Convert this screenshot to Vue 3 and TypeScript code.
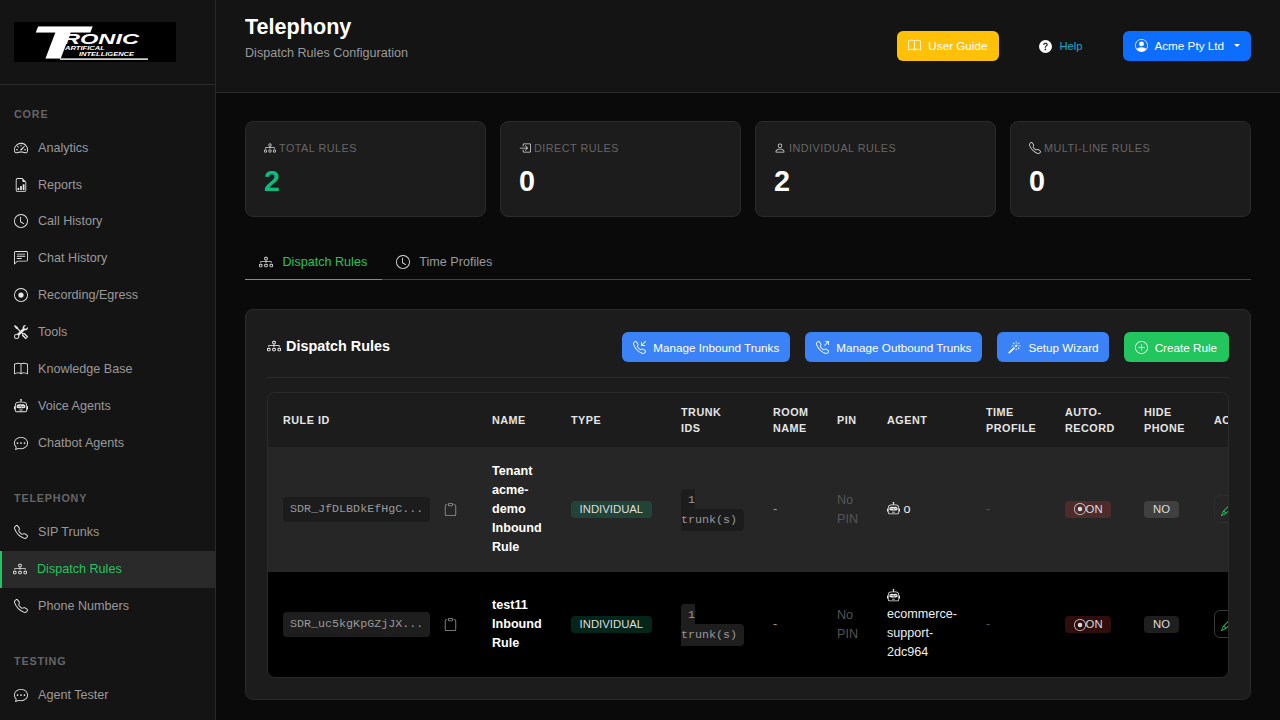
<script setup lang="ts">
import { h } from 'vue'

const phone =
  'M3.654 1.328a.678.678 0 0 0-1.015-.063L1.605 2.3c-.483.484-.661 1.169-.45 1.77a17.568 17.568 0 0 0 4.168 6.608 17.569 17.569 0 0 0 6.608 4.168c.601.211 1.286.033 1.77-.45l1.034-1.034a.678.678 0 0 0-.063-1.015l-2.307-1.794a.678.678 0 0 0-.58-.122l-2.19.547a1.745 1.745 0 0 1-1.657-.459L5.482 8.062a1.745 1.745 0 0 1-.46-1.657l.548-2.19a.678.678 0 0 0-.122-.58L3.654 1.328zM1.884.511a1.745 1.745 0 0 1 2.612.163L6.29 2.98c.329.423.445.974.315 1.494l-.547 2.19a.678.678 0 0 0 .178.643l2.457 2.457a.678.678 0 0 0 .644.178l2.189-.547a1.745 1.745 0 0 1 1.494.315l2.306 1.794c.829.645.905 1.87.163 2.611l-1.034 1.034c-.74.74-1.846 1.065-2.877.702a18.634 18.634 0 0 1-7.01-4.42 18.634 18.634 0 0 1-4.42-7.009c-.362-1.03-.037-2.137.703-2.877L1.885.511z'

const icons: Record<string, string[]> = {
  speed: [
    'M8 4a.5.5 0 0 1 .5.5V6a.5.5 0 0 1-1 0V4.5A.5.5 0 0 1 8 4zM3.732 5.732a.5.5 0 0 1 .707 0l.915.914a.5.5 0 1 1-.708.708l-.914-.915a.5.5 0 0 1 0-.707zM2 10a.5.5 0 0 1 .5-.5h1.586a.5.5 0 0 1 0 1H2.5A.5.5 0 0 1 2 10zm9.5 0a.5.5 0 0 1 .5-.5h1.5a.5.5 0 0 1 0 1H12a.5.5 0 0 1-.5-.5zm.754-4.246a.389.389 0 0 0-.527-.02L7.547 9.31a.91.91 0 1 0 1.302 1.258l3.434-4.297a.389.389 0 0 0-.029-.518z',
    'M0 10a8 8 0 1 1 15.547 2.661c-.442 1.253-1.845 1.602-2.932 1.25C11.309 13.488 9.475 13 8 13c-1.474 0-3.31.488-4.615.911-1.087.352-2.49.003-2.932-1.25A7.988 7.988 0 0 1 0 10zm8-7a7 7 0 0 0-6.603 9.329c.203.575.923.876 1.68.63C4.397 12.533 6.358 12 8 12s3.604.532 4.923.96c.757.245 1.477-.056 1.68-.631A7 7 0 0 0 8 3z'
  ],
  report: [
    'M10 13.5a.5.5 0 0 0 .5.5h1a.5.5 0 0 0 .5-.5v-6a.5.5 0 0 0-.5-.5h-1a.5.5 0 0 0-.5.5v6zm-2.5.5a.5.5 0 0 1-.5-.5v-4a.5.5 0 0 1 .5-.5h1a.5.5 0 0 1 .5.5v4a.5.5 0 0 1-.5.5h-1zm-3 0a.5.5 0 0 1-.5-.5v-2a.5.5 0 0 1 .5-.5h1a.5.5 0 0 1 .5.5v2a.5.5 0 0 1-.5.5h-1z',
    'M14 14V4.5L9.5 0H4a2 2 0 0 0-2 2v12a2 2 0 0 0 2 2h8a2 2 0 0 0 2-2zM9.5 3A1.5 1.5 0 0 0 11 4.5h2V14a1 1 0 0 1-1 1H4a1 1 0 0 1-1-1V2a1 1 0 0 1 1-1h5.5v2z'
  ],
  clock: [
    'M8 3.5a.5.5 0 0 0-1 0V9a.5.5 0 0 0 .252.434l3.5 2a.5.5 0 0 0 .496-.868L8 8.71V3.5z',
    'M8 16A8 8 0 1 0 8 0a8 8 0 0 0 0 16zm7-8A7 7 0 1 1 1 8a7 7 0 0 1 14 0z'
  ],
  chat: [
    'M14 1a1 1 0 0 1 1 1v8a1 1 0 0 1-1 1H4.414A2 2 0 0 0 3 11.586l-2 2V2a1 1 0 0 1 1-1h12zM2 0a2 2 0 0 0-2 2v12.793a.5.5 0 0 0 .854.353l2.853-2.853A1 1 0 0 1 4.414 12H14a2 2 0 0 0 2-2V2a2 2 0 0 0-2-2H2z',
    'M3 3.5a.5.5 0 0 1 .5-.5h9a.5.5 0 0 1 0 1h-9a.5.5 0 0 1-.5-.5zM3 6a.5.5 0 0 1 .5-.5h9a.5.5 0 0 1 0 1h-9A.5.5 0 0 1 3 6zm0 2.5a.5.5 0 0 1 .5-.5h5a.5.5 0 0 1 0 1h-5a.5.5 0 0 1-.5-.5z'
  ],
  record: [
    'M8 15A7 7 0 1 1 8 1a7 7 0 0 1 0 14zm0 1A8 8 0 1 0 8 0a8 8 0 0 0 0 16z',
    'M11 8a3 3 0 1 1-6 0 3 3 0 0 1 6 0z'
  ],
  tools: [
    'M1 0 0 1l2.2 3.081a1 1 0 0 0 .815.419h.07a1 1 0 0 1 .708.293l2.675 2.675-2.617 2.654A3.003 3.003 0 0 0 0 13a3 3 0 1 0 5.878-.851l2.654-2.617.968.968-.305.914a1 1 0 0 0 .242 1.023l3.27 3.27a.997.997 0 0 0 1.414 0l1.586-1.586a.997.997 0 0 0 0-1.414l-3.27-3.27a1 1 0 0 0-1.023-.242L10.5 9.5l-.96-.96 2.68-2.643A3.005 3.005 0 0 0 16 3c0-.269-.035-.53-.102-.777l-2.14 2.141L12 4l-.364-1.757L13.777.102a3 3 0 0 0-3.675 3.68L7.462 6.46 4.793 3.793a1 1 0 0 1-.293-.707v-.071a1 1 0 0 0-.419-.814L1 0Zm9.646 10.646a.5.5 0 0 1 .708 0l2.914 2.915a.5.5 0 0 1-.707.707l-2.915-2.914a.5.5 0 0 1 0-.708ZM3 11l.471.242.529.026.287.445.445.287.026.529L5 13l-.242.471-.026.529-.445.287-.287.445-.529.026L3 15l-.471-.242L2 14.732l-.287-.445L1.268 14l-.026-.529L1 13l.242-.471.026-.529.445-.287.287-.445.529-.026L3 11Z'
  ],
  book: [
    'M1 2.828c.885-.37 2.154-.769 3.388-.893 1.33-.134 2.458.063 3.112.752v9.746c-.935-.53-2.12-.603-3.213-.493-1.18.12-2.37.461-3.287.811V2.828zm7.5-.141c.654-.689 1.782-.886 3.112-.752 1.234.124 2.503.523 3.388.893v9.923c-.918-.35-2.107-.692-3.287-.81-1.094-.111-2.278-.039-3.213.492V2.687zM8 1.783C7.015.936 5.587.81 4.287.94c-1.514.153-3.042.672-3.994 1.105A.5.5 0 0 0 0 2.5v11a.5.5 0 0 0 .707.455c.882-.4 2.303-.881 3.68-1.02 1.409-.142 2.59.087 3.223.877a.5.5 0 0 0 .78 0c.633-.79 1.814-1.019 3.222-.877 1.378.139 2.8.62 3.681 1.02A.5.5 0 0 0 16 13.5v-11a.5.5 0 0 0-.293-.455c-.952-.433-2.48-.952-3.994-1.105C10.413.809 8.985.936 8 1.783z'
  ],
  robot: [
    'M6 12.5a.5.5 0 0 1 .5-.5h3a.5.5 0 0 1 0 1h-3a.5.5 0 0 1-.5-.5ZM3 8.062C3 6.76 4.235 5.765 5.53 5.886a26.58 26.58 0 0 0 4.94 0C11.765 5.765 13 6.76 13 8.062v1.157a.933.933 0 0 1-.765.935c-.845.147-2.34.346-4.235.346-1.895 0-3.39-.2-4.235-.346A.933.933 0 0 1 3 9.219V8.062Zm4.542-.827a.25.25 0 0 0-.217.068l-.92.9a24.767 24.767 0 0 1-1.871-.183.25.25 0 0 0-.068.495c.55.076 1.232.149 2.02.193a.25.25 0 0 0 .189-.071l.754-.736.847 1.71a.25.25 0 0 0 .404.062l.932-.97a25.286 25.286 0 0 0 1.922-.188.25.25 0 0 0-.068-.495c-.538.074-1.207.145-1.98.189a.25.25 0 0 0-.166.076l-.754.785-.842-1.7a.25.25 0 0 0-.182-.135Z',
    'M8.5 1.866a1 1 0 1 0-1 0V3h-2A4.5 4.5 0 0 0 1 7.5V8a1 1 0 0 0-1 1v2a1 1 0 0 0 1 1v1a2 2 0 0 0 2 2h10a2 2 0 0 0 2-2v-1a1 1 0 0 0 1-1V9a1 1 0 0 0-1-1v-.5A4.5 4.5 0 0 0 10.5 3h-2V1.866ZM14 7.5V13a1 1 0 0 1-1 1H3a1 1 0 0 1-1-1V7.5A3.5 3.5 0 0 1 5.5 4h5A3.5 3.5 0 0 1 14 7.5Z'
  ],
  dots: [
    'M5 8a1 1 0 1 1-2 0 1 1 0 0 1 2 0zm4 0a1 1 0 1 1-2 0 1 1 0 0 1 2 0zm3 1a1 1 0 1 0 0-2 1 1 0 0 0 0 2z',
    'm2.165 15.803.02-.004c1.83-.363 2.948-.842 3.468-1.105A9.06 9.06 0 0 0 8 15c4.418 0 8-3.134 8-7s-3.582-7-8-7-8 3.134-8 7c0 1.76.743 3.37 1.97 4.6a10.437 10.437 0 0 1-.524 2.318l-.003.011a10.722 10.722 0 0 1-.244.637c-.079.186.074.394.273.362a21.673 21.673 0 0 0 .693-.125zm.8-3.108a1 1 0 0 0-.287-.801C1.618 10.83 1 9.468 1 8c0-3.192 3.004-6 7-6s7 2.808 7 6c0 3.193-3.004 6-7 6a8.06 8.06 0 0 1-2.088-.272 1 1 0 0 0-.711.074c-.387.196-1.24.57-2.634.893a10.97 10.97 0 0 0 .398-2z'
  ],
  phone: [phone],
  inbound: [
    'M15.854.146a.5.5 0 0 1 0 .708L11.707 5H14.5a.5.5 0 0 1 0 1h-4a.5.5 0 0 1-.5-.5v-4a.5.5 0 0 1 1 0v2.793L15.146.146a.5.5 0 0 1 .708 0z',
    phone
  ],
  outbound: [
    'M11 .5a.5.5 0 0 1 .5-.5h4a.5.5 0 0 1 .5.5v4a.5.5 0 0 1-1 0V1.707l-4.146 4.147a.5.5 0 0 1-.708-.708L14.293 1H11.5a.5.5 0 0 1-.5-.5z',
    phone
  ],
  diagram: [
    'M6 3.5A1.5 1.5 0 0 1 7.5 2h1A1.5 1.5 0 0 1 10 3.5v1A1.5 1.5 0 0 1 8.5 6v1H14a.5.5 0 0 1 .5.5v1a.5.5 0 0 1-1 0V8h-5v.5a.5.5 0 0 1-1 0V8h-5v.5a.5.5 0 0 1-1 0v-1A.5.5 0 0 1 2 7h5.5V6A1.5 1.5 0 0 1 6 4.5v-1zM8.5 5a.5.5 0 0 0 .5-.5v-1a.5.5 0 0 0-.5-.5h-1a.5.5 0 0 0-.5.5v1a.5.5 0 0 0 .5.5h1zM0 11.5A1.5 1.5 0 0 1 1.5 10h1A1.5 1.5 0 0 1 4 11.5v1A1.5 1.5 0 0 1 2.5 14h-1A1.5 1.5 0 0 1 0 12.5v-1zm1.5-.5a.5.5 0 0 0-.5.5v1a.5.5 0 0 0 .5.5h1a.5.5 0 0 0 .5-.5v-1a.5.5 0 0 0-.5-.5h-1zm4.5.5A1.5 1.5 0 0 1 7.5 10h1a1.5 1.5 0 0 1 1.5 1.5v1A1.5 1.5 0 0 1 8.5 14h-1A1.5 1.5 0 0 1 6 12.5v-1zm1.5-.5a.5.5 0 0 0-.5.5v1a.5.5 0 0 0 .5.5h1a.5.5 0 0 0 .5-.5v-1a.5.5 0 0 0-.5-.5h-1zm4.5.5a1.5 1.5 0 0 1 1.5-1.5h1a1.5 1.5 0 0 1 1.5 1.5v1a1.5 1.5 0 0 1-1.5 1.5h-1a1.5 1.5 0 0 1-1.5-1.5v-1zm1.5-.5a.5.5 0 0 0-.5.5v1a.5.5 0 0 0 .5.5h1a.5.5 0 0 0 .5-.5v-1a.5.5 0 0 0-.5-.5h-1z'
  ],
  direct: [
    'M6 3.5a.5.5 0 0 1 .5-.5h8a.5.5 0 0 1 .5.5v9a.5.5 0 0 1-.5.5h-8a.5.5 0 0 1-.5-.5v-2a.5.5 0 0 0-1 0v2A1.5 1.5 0 0 0 6.5 14h8a1.5 1.5 0 0 0 1.5-1.5v-9A1.5 1.5 0 0 0 14.5 2h-8A1.5 1.5 0 0 0 5 3.5v2a.5.5 0 0 0 1 0v-2z',
    'M11.854 8.354a.5.5 0 0 0 0-.708l-3-3a.5.5 0 1 0-.708.708L10.293 7.5H1.5a.5.5 0 0 0 0 1h8.793l-2.147 2.146a.5.5 0 0 0 .708.708l3-3z'
  ],
  person: [
    'M8 8a3 3 0 1 0 0-6 3 3 0 0 0 0 6zm2-3a2 2 0 1 1-4 0 2 2 0 0 1 4 0zm4 8c0 1-1 1-1 1H3s-1 0-1-1 1-4 6-4 6 3 6 4zm-1-.004c-.001-.246-.154-.986-.832-1.664C11.516 10.68 10.289 10 8 10c-2.29 0-3.516.68-4.168 1.332-.678.678-.83 1.418-.832 1.664h10z'
  ],
  magic: [
    'M9.5 2.672a.5.5 0 1 0 1 0V.843a.5.5 0 0 0-1 0v1.829Zm4.5.035A.5.5 0 0 0 13.293 2L12 3.293a.5.5 0 1 0 .707.707L14 2.707ZM7.293 4A.5.5 0 1 0 8 3.293L6.707 2A.5.5 0 0 0 6 2.707L7.293 4Zm-.621 2.5a.5.5 0 1 0 0-1H4.843a.5.5 0 1 0 0 1h1.829Zm8.485 0a.5.5 0 1 0 0-1h-1.829a.5.5 0 0 0 0 1h1.829ZM13.293 10A.5.5 0 1 0 14 9.293L12.707 8a.5.5 0 1 0-.707.707L13.293 10ZM9.5 11.157a.5.5 0 0 0 1 0V9.328a.5.5 0 0 0-1 0v1.829Zm1.854-5.097a.5.5 0 0 0 0-.706l-.708-.708a.5.5 0 0 0-.707 0L8.646 5.94a.5.5 0 0 0 0 .707l.708.708a.5.5 0 0 0 .707 0l1.293-1.293Zm-3 3a.5.5 0 0 0 0-.706l-.708-.708a.5.5 0 0 0-.707 0L.646 13.94a.5.5 0 0 0 0 .707l.708.708a.5.5 0 0 0 .707 0L8.354 9.06Z'
  ],
  plus: [
    'M8 15A7 7 0 1 1 8 1a7 7 0 0 1 0 14zm0 1A8 8 0 1 0 8 0a8 8 0 0 0 0 16z',
    'M8 4a.5.5 0 0 1 .5.5v3h3a.5.5 0 0 1 0 1h-3v3a.5.5 0 0 1-1 0v-3h-3a.5.5 0 0 1 0-1h3v-3A.5.5 0 0 1 8 4z'
  ],
  clipboard: [
    'M4 1.5H3a2 2 0 0 0-2 2V14a2 2 0 0 0 2 2h10a2 2 0 0 0 2-2V3.5a2 2 0 0 0-2-2h-1v1h1a1 1 0 0 1 1 1V14a1 1 0 0 1-1 1H3a1 1 0 0 1-1-1V3.5a1 1 0 0 1 1-1h1v-1z',
    'M9.5 1a.5.5 0 0 1 .5.5v1a.5.5 0 0 1-.5.5h-3a.5.5 0 0 1-.5-.5v-1a.5.5 0 0 1 .5-.5h3zm-3-1A1.5 1.5 0 0 0 5 1.5v1A1.5 1.5 0 0 0 6.5 4h3A1.5 1.5 0 0 0 11 2.5v-1A1.5 1.5 0 0 0 9.5 0h-3z'
  ],
  question: [
    'M16 8A8 8 0 1 1 0 8a8 8 0 0 1 16 0zM5.496 6.033h.825c.138 0 .248-.113.266-.25.09-.656.54-1.134 1.342-1.134.686 0 1.314.343 1.314 1.168 0 .635-.374.927-.965 1.371-.673.489-1.206 1.06-1.168 1.987l.003.217a.25.25 0 0 0 .25.246h.811a.25.25 0 0 0 .25-.25v-.105c0-.718.273-.927 1.01-1.486.609-.463 1.244-.977 1.244-2.056 0-1.511-1.276-2.241-2.673-2.241-1.267 0-2.655.59-2.75 2.286a.237.237 0 0 0 .241.247zm2.325 6.443c.61 0 1.029-.394 1.029-.927 0-.552-.42-.94-1.029-.94-.584 0-1.009.388-1.009.94 0 .533.425.927 1.01.927z'
  ],
  user: [
    'M11 6a3 3 0 1 1-6 0 3 3 0 0 1 6 0z',
    'M0 8a8 8 0 1 1 16 0A8 8 0 0 1 0 8zm8-7a7 7 0 0 0-5.468 11.37C3.242 11.226 4.805 10 8 10s4.757 1.225 5.468 2.37A7 7 0 0 0 8 1z'
  ],
  pencil: [
    'M12.146.146a.5.5 0 0 1 .708 0l3 3a.5.5 0 0 1 0 .708l-10 10a.5.5 0 0 1-.168.11l-5 2a.5.5 0 0 1-.65-.65l2-5a.5.5 0 0 1 .11-.168l10-10zM11.207 2.5 13.5 4.793 14.793 3.5 12.5 1.207 11.207 2.5zm1.586 3L10.5 3.207 4 9.707V10h.5a.5.5 0 0 1 .5.5v.5h.5a.5.5 0 0 1 .5.5v.5h.293l6.5-6.5zm-9.761 5.175-.106.106-1.528 3.821 3.821-1.528.106-.106A.5.5 0 0 1 5 12.5V12h-.5a.5.5 0 0 1-.5-.5V11h-.5a.5.5 0 0 1-.468-.325z'
  ]
}

const Bi = (props: { name: string; size?: number | string }) =>
  h(
    'svg',
    {
      width: props.size ?? 14,
      height: props.size ?? 14,
      viewBox: '0 0 16 16',
      fill: 'currentColor',
      style: 'flex:none'
    },
    icons[props.name].map((d) => h('path', { d, 'fill-rule': 'evenodd' }))
  )
Bi.props = ['name', 'size']

interface NavItem {
  label: string
  icon: string
  active?: boolean
}
const nav: { title: string; items: NavItem[] }[] = [
  {
    title: 'CORE',
    items: [
      { label: 'Analytics', icon: 'speed' },
      { label: 'Reports', icon: 'report' },
      { label: 'Call History', icon: 'clock' },
      { label: 'Chat History', icon: 'chat' },
      { label: 'Recording/Egress', icon: 'record' },
      { label: 'Tools', icon: 'tools' },
      { label: 'Knowledge Base', icon: 'book' },
      { label: 'Voice Agents', icon: 'robot' },
      { label: 'Chatbot Agents', icon: 'dots' }
    ]
  },
  {
    title: 'TELEPHONY',
    items: [
      { label: 'SIP Trunks', icon: 'phone' },
      { label: 'Dispatch Rules', icon: 'diagram', active: true },
      { label: 'Phone Numbers', icon: 'phone' }
    ]
  },
  { title: 'TESTING', items: [{ label: 'Agent Tester', icon: 'dots' }] }
]

const stats = [
  { label: 'TOTAL RULES', value: '2', icon: 'diagram', green: true },
  { label: 'DIRECT RULES', value: '0', icon: 'direct' },
  { label: 'INDIVIDUAL RULES', value: '2', icon: 'person' },
  { label: 'MULTI-LINE RULES', value: '0', icon: 'phone' }
]

const actions = [
  { label: 'Manage Inbound Trunks', icon: 'inbound' },
  { label: 'Manage Outbound Trunks', icon: 'outbound' },
  { label: 'Setup Wizard', icon: 'magic' },
  { label: 'Create Rule', icon: 'plus', green: true }
]

const columns = [
  { label: 'RULE ID', w: 209 },
  { label: 'NAME', w: 79 },
  { label: 'TYPE', w: 110 },
  { label: 'TRUNK IDS', w: 92 },
  { label: 'ROOM NAME', w: 64 },
  { label: 'PIN', w: 50 },
  { label: 'AGENT', w: 99 },
  { label: 'TIME PROFILE', w: 79 },
  { label: 'AUTO-RECORD', w: 79 },
  { label: 'HIDE PHONE', w: 70 },
  { label: 'ACTIONS', w: 110 }
]

const rows = [
  { id: 'SDR_JfDLBDkEfHgC...', name: 'Tenant acme-demo Inbound Rule', agent: 'o', odd: true },
  { id: 'SDR_uc5kgKpGZjJX...', name: 'test11 Inbound Rule', agent: 'ecommerce-support-2dc964', odd: false }
]
</script>

<template>
  <div class="app">
    <aside class="sidebar">
      <div class="brand">
        <svg class="logo" width="162" height="40" viewBox="0 0 162 40" role="img" aria-label="Tronic Artifical Intelligence">
          <rect width="162" height="40" fill="#000" />
          <text x="17" y="36" textLength="54" lengthAdjust="spacingAndGlyphs" class="lg lg-t">T</text>
          <text x="49" y="22" textLength="76" lengthAdjust="spacingAndGlyphs" class="lg lg-r">RONIC</text>
          <text x="51" y="28" textLength="40" lengthAdjust="spacingAndGlyphs" class="lg lg-s">ARTIFICAL</text>
          <text x="65" y="34" textLength="55" lengthAdjust="spacingAndGlyphs" class="lg lg-s">INTELLIGENCE</text>
          <rect x="46" y="36.4" width="88" height="1.4" fill="#fff" />
        </svg>
      </div>
      <nav class="nav">
        <section v-for="group in nav" :key="group.title" class="nav-group">
          <h6 class="nav-title">{{ group.title }}</h6>
          <a v-for="item in group.items" :key="item.label" class="nav-item" :class="{ active: item.active }">
            <Bi :name="item.icon" class="nav-icon" />
            <span>{{ item.label }}</span>
          </a>
        </section>
      </nav>
    </aside>

    <div class="content">
      <header class="topbar">
        <div class="heading">
          <h1>Telephony</h1>
          <p>Dispatch Rules Configuration</p>
        </div>
        <div class="top-actions">
          <button class="btn guide"><Bi name="book" size="13" />User Guide</button>
          <a class="help"><Bi name="question" size="13" />Help</a>
          <button class="btn tenant"><Bi name="user" size="13" />Acme Pty Ltd<i class="caret"></i></button>
        </div>
      </header>

      <main class="main">
        <div class="stats">
          <div v-for="s in stats" :key="s.label" class="stat">
            <div class="stat-label"><Bi :name="s.icon" size="12" class="stat-icon" />{{ s.label }}</div>
            <div class="stat-value" :class="{ green: s.green }">{{ s.value }}</div>
          </div>
        </div>

        <div class="tabs">
          <a class="tab active"><Bi name="diagram" class="tab-icon" />Dispatch Rules</a>
          <a class="tab"><Bi name="clock" class="tab-icon" />Time Profiles</a>
        </div>

        <section class="card">
          <div class="card-head">
            <h2><Bi name="diagram" />Dispatch Rules</h2>
            <div class="card-actions">
              <button v-for="a in actions" :key="a.label" class="btn action" :class="{ create: a.green }">
                <Bi :name="a.icon" size="13" />{{ a.label }}
              </button>
            </div>
          </div>
          <div class="table-wrap">
            <table>
              <colgroup>
                <col v-for="c in columns" :key="c.label" :style="{ width: c.w + 'px' }" />
              </colgroup>
              <thead>
                <tr>
                  <th v-for="c in columns" :key="c.label">{{ c.label }}</th>
                </tr>
              </thead>
              <tbody>
                <tr v-for="r in rows" :key="r.id" :class="r.odd ? 'odd' : 'even'">
                  <td>
                    <div class="id-cell">
                      <code class="rule-id">{{ r.id }}</code>
                      <Bi name="clipboard" size="13" class="copy" />
                    </div>
                  </td>
                  <td class="name">{{ r.name }}</td>
                  <td><span class="badge type">INDIVIDUAL</span></td>
                  <td class="trunk-cell"><code class="trunks">1 trunk(s)</code></td>
                  <td class="dash">-</td>
                  <td class="muted pin">No PIN</td>
                  <td class="agent"><Bi name="robot" size="13" class="robot" /> {{ r.agent }}</td>
                  <td class="muted">-</td>
                  <td><span class="badge rec"><Bi name="record" size="12" />ON</span></td>
                  <td><span class="badge no">NO</span></td>
                  <td><button class="edit"><Bi name="pencil" size="13" /></button></td>
                </tr>
              </tbody>
            </table>
          </div>
        </section>
      </main>
    </div>
  </div>
</template>

<style>
html,
body {
  margin: 0;
  background: #0a0a0a;
  overflow: hidden;
}
</style>

<style scoped>
.app {
  display: flex;
  width: 1280px;
  height: 720px;
  overflow: hidden;
  font-family: 'Liberation Sans', Arial, sans-serif;
  color: #fff;
  background: #0a0a0a;
}
.sidebar {
  flex: none;
  width: 215px;
  background: #141414;
  border-right: 1px solid #2a2a2a;
  overflow: hidden;
}
.brand {
  height: 85px;
  box-sizing: border-box;
  padding: 22px 14px 0;
  border-bottom: 1px solid #2a2a2a;
}
.logo {
  display: block;
}
.lg {
  fill: #fff;
  font-family: 'Liberation Sans', Arial, sans-serif;
  font-weight: 700;
  font-style: italic;
}
.lg-t {
  font-size: 44px;
  stroke: #fff;
  stroke-width: 1.2px;
}
.lg-r {
  font-size: 14px;
}
.lg-s {
  font-size: 5px;
}
.nav {
  padding-top: 20px;
}
.nav-group {
  margin-bottom: 28px;
}
.nav-group:nth-child(2) {
  margin-bottom: 27.4px;
}
.nav-title {
  margin: 0 0 6.25px;
  padding-left: 14px;
  height: 18px;
  line-height: 18px;
  font-size: 10.8px;
  font-weight: 700;
  letter-spacing: 0.8px;
  color: #666;
}
.nav-group:nth-child(2) .nav-title {
  margin-bottom: 6.65px;
}
.nav-group:nth-child(3) .nav-title {
  margin-bottom: 6.85px;
}
.nav-item {
  display: flex;
  align-items: center;
  gap: 10px;
  height: 36.9px;
  padding-left: 14px;
  font-size: 12.6px;
  color: #999;
}
.nav-icon {
  color: #e8e8e8;
}
.nav-item.active {
  padding-left: 11px;
  border-left: 2px solid #22c55e;
  background: #2a2a2a;
  color: #22c55e;
}
.content {
  flex: 1;
  min-width: 0;
  display: flex;
  flex-direction: column;
}
.topbar {
  flex: none;
  height: 92px;
  display: flex;
  justify-content: space-between;
  align-items: center;
  padding: 0 29px;
  background: #141414;
  border-bottom: 1px solid #2a2a2a;
}
.heading {
  align-self: flex-start;
  padding-top: 14px;
}
.heading h1 {
  margin: 0;
  font-size: 21.6px;
  line-height: 26px;
  font-weight: 700;
}
.heading p {
  margin: 3px 0 0;
  font-size: 12.6px;
  line-height: 20px;
  color: #999;
}
.top-actions {
  display: flex;
  align-items: center;
}
.btn {
  display: inline-flex;
  align-items: center;
  gap: 7px;
  height: 30px;
  border: 0;
  border-radius: 6px;
  padding: 0 11px;
  font: 400 11.7px 'Liberation Sans', Arial, sans-serif;
  color: #fff;
}
.guide {
  background: #ffc107;
  padding: 0 12px 2px 11px;
}
.help {
  display: inline-flex;
  align-items: center;
  gap: 7px;
  margin: 0 41px 0 40px;
  font-size: 11.2px;
  color: #1fa8c9;
}
.help svg {
  color: #fff;
}
.tenant {
  background: #0d6efd;
  gap: 6px;
  padding: 0 11px 2px 12px;
}
.caret {
  margin-left: 4px;
  border-top: 3.5px solid #fff;
  border-left: 3.5px solid transparent;
  border-right: 3.5px solid transparent;
}
.main {
  flex: 1;
  min-height: 0;
  padding: 28px 29px 0;
}
.stats {
  display: grid;
  grid-template-columns: repeat(4, 1fr);
  gap: 14px;
}
.stat {
  box-sizing: border-box;
  height: 96px;
  padding: 18px;
  background: #1c1c1c;
  border: 1px solid #2a2a2a;
  border-radius: 8px;
}
.stat-label {
  display: flex;
  align-items: center;
  gap: 3px;
  font-size: 10.8px;
  line-height: 16px;
  letter-spacing: 0.5px;
  color: #666;
}
.stat-icon {
  color: #ddd;
}
.stat-value {
  margin-top: 8px;
  font-size: 28.8px;
  line-height: 34px;
  font-weight: 700;
}
.stat-value.green {
  color: #10b981;
}
.tabs {
  display: flex;
  margin-top: 26px;
  height: 37px;
  box-sizing: border-box;
  border-bottom: 1px solid #444;
}
.tab {
  display: flex;
  align-items: center;
  gap: 9.5px;
  height: 37px;
  box-sizing: border-box;
  padding: 0 14px;
  font-size: 12.6px;
  color: #999;
}
.tab-icon {
  color: #ddd;
}
.tab.active {
  padding-right: 14.6px;
  color: #22c55e;
  box-shadow: inset 0 -1px #22c55e;
}
.card {
  margin-top: 29px;
  box-sizing: border-box;
  height: 391px;
  padding: 22px 21px;
  background: #1c1c1c;
  border: 1px solid #2a2a2a;
  border-radius: 8px;
}
.card-head {
  display: flex;
  justify-content: space-between;
  padding-bottom: 15px;
  border-bottom: 1px solid #2a2a2a;
}
.card-head h2 {
  display: flex;
  align-items: center;
  gap: 5px;
  margin: 0 0 2px;
  font-size: 14.4px;
  font-weight: 700;
}
.card-actions {
  display: flex;
  gap: 15px;
}
.action {
  background: #3b82f6;
}
.action:nth-child(3) {
  padding: 0 10px 0 11px;
}
.action.create {
  background: #22c55e;
  padding: 0 12px 0 11px;
}
.table-wrap {
  margin-top: 14px;
  height: 286px;
  box-sizing: border-box;
  border: 1px solid #2a2a2a;
  border-radius: 8px;
  overflow: hidden;
}
table {
  table-layout: fixed;
  width: 1041px;
  border-collapse: collapse;
}
th {
  height: 54px;
  box-sizing: border-box;
  padding: 0 15px;
  text-align: left;
  font-size: 10.8px;
  line-height: 16px;
  font-weight: 700;
  letter-spacing: 0.5px;
  color: #e5e5e5;
  background: #1c1c1c;
}
td {
  padding: 15px;
  font-size: 12.6px;
  line-height: 18.9px;
  color: #eee;
  vertical-align: middle;
}
tr.odd td {
  background: #262626;
}
tr.even td {
  background: #000;
}
td.pin,
td.trunk-cell {
  padding-top: 16px;
  padding-bottom: 14px;
}
.id-cell {
  display: flex;
  align-items: center;
  gap: 14px;
}
code {
  font-family: 'Liberation Mono', 'Courier New', monospace;
  font-size: 11.7px;
  color: #999;
  background: #1c1c1c;
}
.rule-id {
  padding: 4px 7px;
  line-height: 17px;
  border-radius: 4px;
  white-space: nowrap;
}
.copy {
  color: #999;
}
tr.even code {
  background: #1e1e1e;
}
.trunks {
  padding: 4px 7px;
  line-height: 20px;
  border-radius: 4px;
}
.name {
  font-weight: 700;
  color: #fff;
}
.badge {
  display: inline-flex;
  align-items: center;
  height: 17px;
  padding: 0 9px;
  border-radius: 4px;
  font-size: 11.34px;
  line-height: 17px;
  color: #ddd;
  vertical-align: middle;
}
.badge.type {
  background: rgba(16, 185, 129, 0.2);
  padding: 0 8.6px;
}
.badge.rec {
  background: rgba(239, 68, 68, 0.2);
  padding: 0 8.6px;
}
.badge.no {
  background: rgba(255, 255, 255, 0.12);
}
.dash {
  color: #999;
}
.muted {
  color: #555;
}
.robot {
  vertical-align: -2px;
}
.edit {
  display: inline-flex;
  align-items: center;
  justify-content: flex-start;
  width: 32px;
  height: 28px;
  padding: 0 0 0 6px;
  background: transparent;
  border: 1px solid #3a3a3a;
  border-radius: 6px;
  color: #22c55e;
}
tr.odd .edit {
  border-color: #2e2e2e;
}
</style>
